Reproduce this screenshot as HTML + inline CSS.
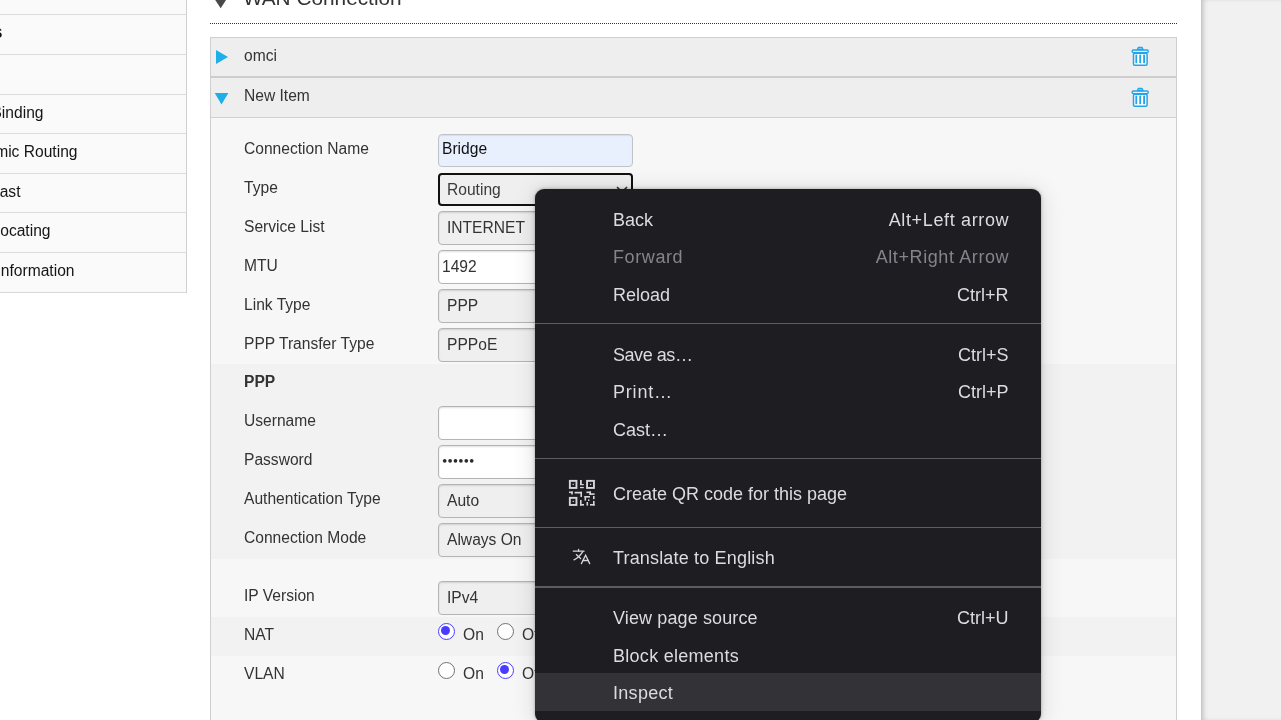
<!DOCTYPE html>
<html><head><meta charset="utf-8">
<style>
*{margin:0;padding:0;box-sizing:border-box}
html,body{width:1281px;height:720px;overflow:hidden;-webkit-font-smoothing:antialiased;background:#fff;font-family:"Liberation Sans",sans-serif;color:#333}
.abs{position:absolute}
#side{left:0;top:0;width:187px;height:293px;background:#fafafa;border-right:1px solid #d0d0d0;border-bottom:1px solid #d8d8d8}
.srow{position:absolute;left:0;width:186px;height:1px;background:#dcdcdc}
.stxt{position:absolute;font-size:15.6px;color:#151515;white-space:nowrap;line-height:18px}
#rgray{left:1201px;top:0;width:80px;height:720px;background:#f1f1f1;box-shadow:inset 4px 0 5px -2px #bcbcbc}
#dots{left:210px;top:23px;width:967px;height:0;border-top:1px dotted #333}
#box{left:210px;top:37px;width:967px;height:700px;border:1px solid #cfcfcf;background:#f7f7f7}
.hdr{position:absolute;left:0;width:965px;background:#eeeeee}
.htxt{position:absolute;left:244px;font-size:15.6px;color:#333;line-height:18px;white-space:nowrap}
.lbl{position:absolute;left:244px;font-size:15.6px;color:#333;white-space:nowrap;line-height:18px}
.inp{position:absolute;left:438px;width:195px;height:34px;border:1px solid #b4b4b4;border-radius:4px;background:#efefef;box-shadow:inset 0 1px 2px rgba(0,0,0,.13);font-size:15.6px;color:#333;padding-left:8px;line-height:32px;white-space:nowrap;overflow:hidden}
.band{position:absolute;left:211px;width:965px;background:#f2f2f2}
.radio{position:absolute;width:17px;height:17px;border-radius:50%;border:1.5px solid #707070;background:#fff}
.radio.on{border:1.8px solid #4a3cff}
.radio.on:after{content:"";position:absolute;left:2px;top:2px;width:9.4px;height:9.4px;border-radius:50%;background:#4a3cff}
.rtxt{position:absolute;font-size:15.6px;color:#333;line-height:18px;white-space:nowrap}
#menu{left:535px;top:189px;width:506px;height:534px;background:#1e1d22;border-radius:9px;box-shadow:0 0 3px rgba(0,0,0,.28),0 0 8px rgba(0,0,0,.1),0 2px 24px rgba(0,0,0,.13);overflow:hidden}
.mi{position:absolute;left:78px;font-size:18px;color:#dcdce0;line-height:22px;white-space:nowrap}
.mk{position:absolute;right:32.4px;font-size:18px;color:#dcdce0;line-height:22px;white-space:nowrap}
.dis{color:#84858a}
.sep{position:absolute;left:0;width:506px;height:1px;background:#5d5c61}
</style></head><body><div id="wrap" style="position:absolute;left:0;top:0;width:1281px;height:720px;will-change:transform">
<div id="side" class="abs">
  <div class="srow" style="top:14px"></div>
  <div class="srow" style="top:54px"></div>
  <div class="srow" style="top:94px"></div>
  <div class="srow" style="top:133px"></div>
  <div class="srow" style="top:173px"></div>
  <div class="srow" style="top:212px"></div>
  <div class="srow" style="top:252px"></div>
  <div class="stxt" style="top:23px;right:183.6px;font-size:17.5px;font-weight:bold;color:#111">Cs</div>
  <div class="stxt" style="top:104px;right:142.5px">Binding</div>
  <div class="stxt" style="top:143px;right:108.5px">Dynamic Routing</div>
  <div class="stxt" style="top:183px;right:165.5px">Broadcast</div>
  <div class="stxt" style="top:222px;right:135.5px">Allocating</div>
  <div class="stxt" style="top:262px;right:111.5px">Information</div>
</div>
<div id="rgray" class="abs"></div>
<div class="abs" style="left:242.9px;top:-13.6px;font-size:20.8px;color:#333;line-height:24px;white-space:nowrap">WAN Connection</div>
<svg class="abs" style="left:210px;top:-4px" width="20" height="16"><polygon points="3.4,1.2 17.8,1.2 10.7,12.3" fill="#484848"/></svg>
<div id="dots" class="abs"></div>
<div id="box" class="abs">
  <div class="hdr" style="top:0;height:40px;border-bottom:2px solid #cdcdcd"></div>
  <div class="hdr" style="top:40px;height:40px;border-bottom:1px solid #d0d0d0"></div>
</div>
<div class="band" style="top:364px;height:195px"></div>
<div class="band" style="top:617px;height:39px"></div>
<svg class="abs" style="left:0;top:0" width="1281" height="720">
  <polygon points="216,50 216,64 228,57" fill="#1faee9"/>
  <polygon points="214.7,93 228.4,93 221.5,104.5" fill="#1faee9"/>
  <g id="trash" fill="none" stroke="#22a4e8">
    <rect x="1133.5" y="53.3" width="13.6" height="12" rx="1.2" stroke-width="1.5" fill="#fff"/>
    <rect x="1135.4" y="54.6" width="1.8" height="8.6" fill="#22a4e8" stroke="none"/>
    <rect x="1139.3" y="54.6" width="1.8" height="8.6" fill="#22a4e8" stroke="none"/>
    <rect x="1143.2" y="54.6" width="1.8" height="8.6" fill="#22a4e8" stroke="none"/>
    <rect x="1132.2" y="50" width="16" height="2.6" rx="1" stroke-width="1.4" fill="#e8f4fc"/>
    <path d="M1138.3 47.5 L1142.1 47.5 L1143 49.6 L1137.4 49.6 Z" stroke-width="1.3" stroke-linejoin="round" fill="#9fd2f2"/>
  </g>
  <use href="#trash" x="0" y="41"/>
</svg>
<div class="htxt" style="top:47px">omci</div>
<div class="htxt" style="top:87px">New Item</div>

<div class="lbl" style="top:140px">Connection Name</div>
<div class="lbl" style="top:179px">Type</div>
<div class="lbl" style="top:218px">Service List</div>
<div class="lbl" style="top:257px">MTU</div>
<div class="lbl" style="top:296px">Link Type</div>
<div class="lbl" style="top:335px">PPP Transfer Type</div>
<div class="lbl" style="top:373px;font-weight:bold">PPP</div>
<div class="lbl" style="top:412px">Username</div>
<div class="lbl" style="top:451px">Password</div>
<div class="lbl" style="top:490px">Authentication Type</div>
<div class="lbl" style="top:529px">Connection Mode</div>
<div class="lbl" style="top:587px">IP Version</div>
<div class="lbl" style="top:626px">NAT</div>
<div class="lbl" style="top:665px">VLAN</div>

<div class="inp" style="top:134px;height:33px;line-height:28px;background:#e8f0fe;color:#111;padding-left:3px;border-color:#c0c3c8;box-shadow:inset 0 1px 1px rgba(0,0,0,.08)">Bridge</div>
<div class="inp" style="top:173px;height:33px;border:2px solid #111;padding-left:7px;line-height:29px;color:#3a3a3a;border-radius:4px;box-shadow:none">Routing<svg class="abs" style="left:176.4px;top:10.5px" width="12" height="8"><polyline points="1,1 6,6 11,1" fill="none" stroke="#333" stroke-width="1.6"/></svg></div>
<div class="inp" style="top:211px">INTERNET</div>
<div class="inp" style="top:250px;background:#fff;padding-left:3px">1492</div>
<div class="inp" style="top:289px">PPP</div>
<div class="inp" style="top:328px">PPPoE</div>
<div class="inp" style="top:406px;background:#fff"></div>
<div class="inp" style="top:445px;background:#fff"><svg class="abs" style="left:2.2px;top:11.1px" width="40" height="10"><g fill="#2a2a2a"><circle cx="3.7" cy="3.8" r="1.85"/><circle cx="9.1" cy="3.8" r="1.85"/><circle cx="14.5" cy="3.8" r="1.85"/><circle cx="19.9" cy="3.8" r="1.85"/><circle cx="25.3" cy="3.8" r="1.85"/><circle cx="30.7" cy="3.8" r="1.85"/></g></svg></div>
<div class="inp" style="top:484px">Auto</div>
<div class="inp" style="top:523px">Always On</div>
<div class="inp" style="top:581px">IPv4</div>

<div class="radio on" style="left:438px;top:623px"></div>
<div class="rtxt" style="left:463px;top:626px">On</div>
<div class="radio" style="left:497px;top:623px"></div>
<div class="rtxt" style="left:522px;top:626px">Off</div>
<div class="radio" style="left:438px;top:662px"></div>
<div class="rtxt" style="left:463px;top:665px">On</div>
<div class="radio on" style="left:497px;top:662px"></div>
<div class="rtxt" style="left:522px;top:665px">Off</div>

<div id="menu" class="abs">
  <div class="mi" style="top:20px">Back</div><div class="mk" style="top:20px;letter-spacing:0.64px;right:31.8px">Alt+Left arrow</div>
  <div class="mi dis" style="top:57px;letter-spacing:0.6px">Forward</div><div class="mk dis" style="top:57px;letter-spacing:0.6px;right:31.8px">Alt+Right Arrow</div>
  <div class="mi" style="top:95px">Reload</div><div class="mk" style="top:95px">Ctrl+R</div>
  <div class="sep" style="top:134px"></div>
  <div class="mi" style="top:155px;letter-spacing:-0.45px">Save as&#8230;</div><div class="mk" style="top:155px">Ctrl+S</div>
  <div class="mi" style="top:192px;letter-spacing:0.8px">Print&#8230;</div><div class="mk" style="top:192px">Ctrl+P</div>
  <div class="mi" style="top:230px">Cast&#8230;</div>
  <div class="sep" style="top:269px"></div>
  <svg style="position:absolute;left:30px;top:287px" width="35" height="35" viewBox="0 0 35 35">
    <g fill="none" stroke="#d6d6da" stroke-width="1.9">
      <rect x="4.85" y="4.85" width="6.6" height="7.1"/>
      <rect x="22.05" y="4.85" width="6.9" height="7.1"/>
      <rect x="4.85" y="21.85" width="6.6" height="7.1"/>
    </g>
    <g fill="#d6d6da">
      <rect x="7.6" y="7.8" width="1.2" height="1.2"/>
      <rect x="25" y="7.8" width="1.2" height="1.2"/>
      <rect x="7.6" y="24.8" width="1.2" height="1.2"/>
      <rect x="15" y="4" width="1.8" height="5"/>
      <rect x="15" y="8" width="3.8" height="1.2"/>
      <rect x="15" y="10.9" width="3.8" height="1.3"/>
      <rect x="4" y="15.5" width="3.8" height="1.6"/>
      <rect x="6.2" y="15.5" width="1.6" height="3"/>
      <rect x="9.6" y="15.8" width="7.4" height="1.7"/>
      <rect x="15.4" y="15.8" width="1.6" height="5.2"/>
      <rect x="21.4" y="15.5" width="4.6" height="1.6"/>
      <rect x="24.4" y="15.5" width="1.6" height="3.2"/>
      <rect x="24.4" y="17.3" width="5.2" height="1.6"/>
      <rect x="15" y="24" width="1.6" height="5.6"/>
      <rect x="15" y="28" width="4" height="1.6"/>
      <rect x="19.5" y="20" width="5.5" height="1.6"/>
      <rect x="19.5" y="20" width="1.6" height="4.6"/>
      <rect x="28" y="20" width="1.6" height="3.2"/>
      <rect x="25" y="28" width="4.6" height="1.6"/>
      <rect x="28" y="25" width="1.6" height="4.6"/>
      <rect x="21.5" y="26" width="1.6" height="3.6"/>
      <rect x="23" y="23.4" width="1.4" height="1.6"/>
    </g>
  </svg>
  <svg style="position:absolute;left:33px;top:355px" width="28" height="26" viewBox="0 0 28 26">
    <g fill="none" stroke="#d6d6da" stroke-width="1.3" stroke-linecap="round">
      <line x1="5.3" y1="7.2" x2="16" y2="7.2"/>
      <line x1="10.6" y1="5.4" x2="10.6" y2="7.2"/>
      <path d="M14.8 7.6 Q11 13.5 6 15.8"/>
      <line x1="8.3" y1="10.6" x2="12.6" y2="14.6"/>
      <path d="M13.4 19.6 L17.6 11.2 L21.7 19.6"/>
      <line x1="15" y1="16.5" x2="20.2" y2="16.5"/>
    </g>
  </svg>
  <div class="mi" style="top:294px">Create QR code for this page</div>
  <div class="sep" style="top:338px"></div>
  <div class="mi" style="top:358px;letter-spacing:0.17px">Translate to English</div>
  <div class="sep" style="top:397px;height:2px"></div>
  <div style="position:absolute;left:0;top:484px;width:506px;height:38px;background:#333237"></div>
  <div class="mi" style="top:418px;letter-spacing:0.12px">View page source</div><div class="mk" style="top:418px">Ctrl+U</div>
  <div class="mi" style="top:456px;letter-spacing:0.28px">Block elements</div>
  <div class="mi" style="top:493px;letter-spacing:0.3px">Inspect</div>
</div>
</div></body></html>
